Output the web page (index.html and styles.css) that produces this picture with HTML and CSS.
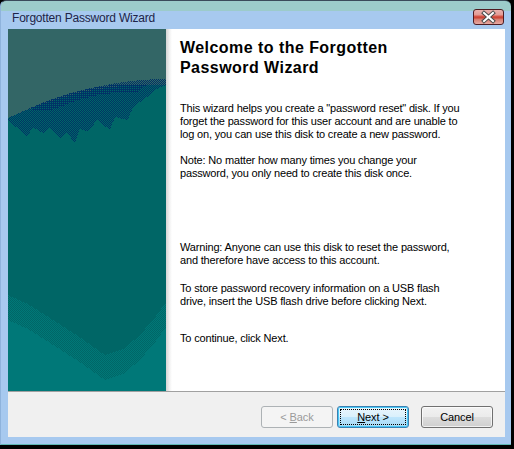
FILE: index.html
```html
<!DOCTYPE html>
<html>
<head>
<meta charset="utf-8">
<link rel="stylesheet" href="styles.css">
</head>
<body>
<div class="window">
  <div class="titlebar">
    <span class="title">Forgotten Password Wizard</span>
    <div class="close">
      <svg width="29" height="14" viewBox="0 0 29 14">
        <path d="M10 3 L19 11 M19 3 L10 11" stroke="#4a4a4a" stroke-width="4" stroke-linecap="square"/>
        <path d="M10 3 L19 11 M19 3 L10 11" stroke="#ffffff" stroke-width="2" stroke-linecap="square"/>
      </svg>
    </div>
  </div>
  <div class="client">
    <div class="main">
      <div class="banner">
        <svg width="158" height="362" viewBox="0 0 158 362" shape-rendering="crispEdges">
          <defs>
            <pattern id="dither" width="2" height="2" patternUnits="userSpaceOnUse">
              <rect x="0" y="0" width="1" height="1" fill="#003366"/>
              <rect x="1" y="1" width="1" height="1" fill="#003366"/>
            </pattern>
            <pattern id="dense" width="2" height="2" patternUnits="userSpaceOnUse">
              <rect x="0" y="0" width="2" height="1" fill="#003366"/>
              <rect x="1" y="1" width="1" height="1" fill="#003366"/>
            </pattern>
            <pattern id="light" width="2" height="2" patternUnits="userSpaceOnUse">
              <rect x="0" y="0" width="1" height="1" fill="#007878"/>
              <rect x="1" y="1" width="1" height="1" fill="#007878"/>
            </pattern>
          </defs>
          <rect width="158" height="362" fill="#336666"/>
          <path d="M0 89 Q81 52 158 56 L158 362 L0 362 Z" fill="#006666"/>
          <path d="M0 89 Q81 50 158 50 L158 56 L149 60 L139 68 L125 78 L120 91 L107 88 L102 101 L89 91 L80 103 L72 100 L67 114 L59 104 L52 109 L42 98 L35 104 L25 98 L19 108 L12 101 L0 92 Z" fill="url(#dither)"/>
          <path d="M20 80 Q81 52 140 55 L128 64 Q90 62 60 75 L40 82 Z" fill="url(#dense)"/>
          <path d="M0 266 L20 275 L42 289 L70 307 L97 326 L115 320 L132 306 L148 287 L158 273 L158 298 L148 312 L132 331 L115 345 L97 351 L70 332 L42 314 L20 300 L0 291 Z" fill="url(#light)"/>
          <path d="M0 291 L20 300 L42 314 L70 332 L97 351 L115 345 L132 331 L148 312 L158 298 L158 362 L0 362 Z" fill="#007878"/>
        </svg>
      </div>
      <div class="shade"></div>
      <div class="content">
        <h1 class="heading">Welcome to the Forgotten<br>Password Wizard</h1>
        <p class="para p1">This wizard helps you create a "password reset" disk. If you<br>forget the password for this user account and are unable to<br>log on, you can use this disk to create a new password.</p>
        <p class="para p2">Note: No matter how many times you change your<br>password, you only need to create this disk once.</p>
        <p class="para p3">Warning: Anyone can use this disk to reset the password,<br>and therefore have access to this account.</p>
        <p class="para p4">To store password recovery information on a USB flash<br>drive, insert the USB flash drive before clicking Next.</p>
        <p class="para p5">To continue, click Next.</p>
      </div>
    </div>
    <div class="footer">
      <div class="btn btn-disabled"><span class="label">&lt; <u>B</u>ack</span></div>
      <div class="btn btn-default"><span class="focus"><span class="label"><u>N</u>ext &gt;</span></span></div>
      <div class="btn btn-cancel"><span class="label">Cancel</span></div>
    </div>
  </div>
</div>
</body>
</html>
```

FILE: styles.css
```css
* { box-sizing: border-box; }
html, body { margin: 0; padding: 0; }
body {
  background: #000;
  width: 514px;
  height: 449px;
  overflow: hidden;
  font-family: "Liberation Sans", Arial, sans-serif;
}
.window {
  width: 511px;
  height: 445px;
  background: linear-gradient(#9ccbca 0, #9ccbca 10px, #a7c9ef 10px);
  border-left: 1px solid #8fb3dc;
  border-top: 1px solid #3a4a5a;
  border-bottom: 1px solid #5fb8b4;
  border-top-left-radius: 6px;
  border-top-right-radius: 6px;
  display: flex;
  flex-direction: column;
}
.titlebar {
  height: 28px;
  display: flex;
  align-items: flex-start;
  justify-content: space-between;
  padding: 0 7px 0 11px;
}
.title {
  font-size: 12px;
  letter-spacing: -0.2px;
  color: #1e2448;
  margin-top: 10px;
  line-height: 14px;
}
.close {
  margin-top: 8px;
  width: 31px;
  height: 16px;
  border: 1px solid #4e1c22;
  border-radius: 3px;
  background: linear-gradient(#eab1ad 0, #e39a94 5px, #d8574a 6px, #c84232 8px, #d77a6e 9px, #e7aaa3 14px);
  display: flex;
  align-items: center;
  justify-content: center;
}
.close svg { display: block; }
.client {
  margin-left: 7px;
  width: 497px;
  display: flex;
  flex-direction: column;
}
.main {
  height: 362px;
  display: flex;
  background: #fff;
}
.banner { width: 158px; height: 362px; flex: none; }
.banner svg { display: block; }
.shade {
  width: 6px;
  flex: none;
  background: linear-gradient(to right, #d4d4d4, #f2f2f2 60%, #fff);
}
.content {
  flex: 1;
  padding: 9px 0 0 8px;
  color: #000;
}
.heading {
  margin: 0;
  font-size: 16px;
  font-weight: bold;
  line-height: 20px;
  letter-spacing: 0.45px;
}
.para {
  margin: 0;
  font-size: 11px;
  line-height: 13px;
  letter-spacing: -0.17px;
}
.p1 { margin-top: 24px; }
.p2 { margin-top: 13px; }
.p3 { margin-top: 61px; }
.p4 { margin-top: 15px; }
.p5 { margin-top: 24px; }
.footer {
  height: 46px;
  background: #f0f0f0;
  border-top: 1px solid #a0a0a0;
  display: flex;
  justify-content: flex-end;
  align-items: flex-start;
  padding: 14px 12px 0 0;
}
.btn {
  width: 72px;
  height: 22px;
  border: 1px solid #707070;
  border-radius: 3px;
  font-size: 11px;
  letter-spacing: -0.1px;
  display: flex;
  align-items: center;
  justify-content: center;
  color: #000;
  background: linear-gradient(#f2f2f2 0, #ebebeb 50%, #dddddd 50%, #cfcfcf 100%);
  box-shadow: inset 0 0 0 1px rgba(255,255,255,0.7);
}
.label { white-space: pre; }
.btn u { text-decoration: underline; }
.btn-disabled {
  border-color: #adb2b5;
  background: #f4f4f4;
  color: #9a9a9a;
  box-shadow: none;
}
.btn-default {
  margin-left: 4px;
  border-color: #3c7fb1;
  box-shadow: inset 0 0 0 1px #48c8f5;
  background: linear-gradient(#eaf6fd 0, #d9f0fc 50%, #bee6fd 50%, #a7d9f5 100%);
  padding: 2px;
}
.focus {
  flex: 1;
  align-self: stretch;
  border: 1px dotted #000;
  display: flex;
  align-items: center;
  justify-content: center;
}
.btn-cancel { margin-left: 12px; }
```
